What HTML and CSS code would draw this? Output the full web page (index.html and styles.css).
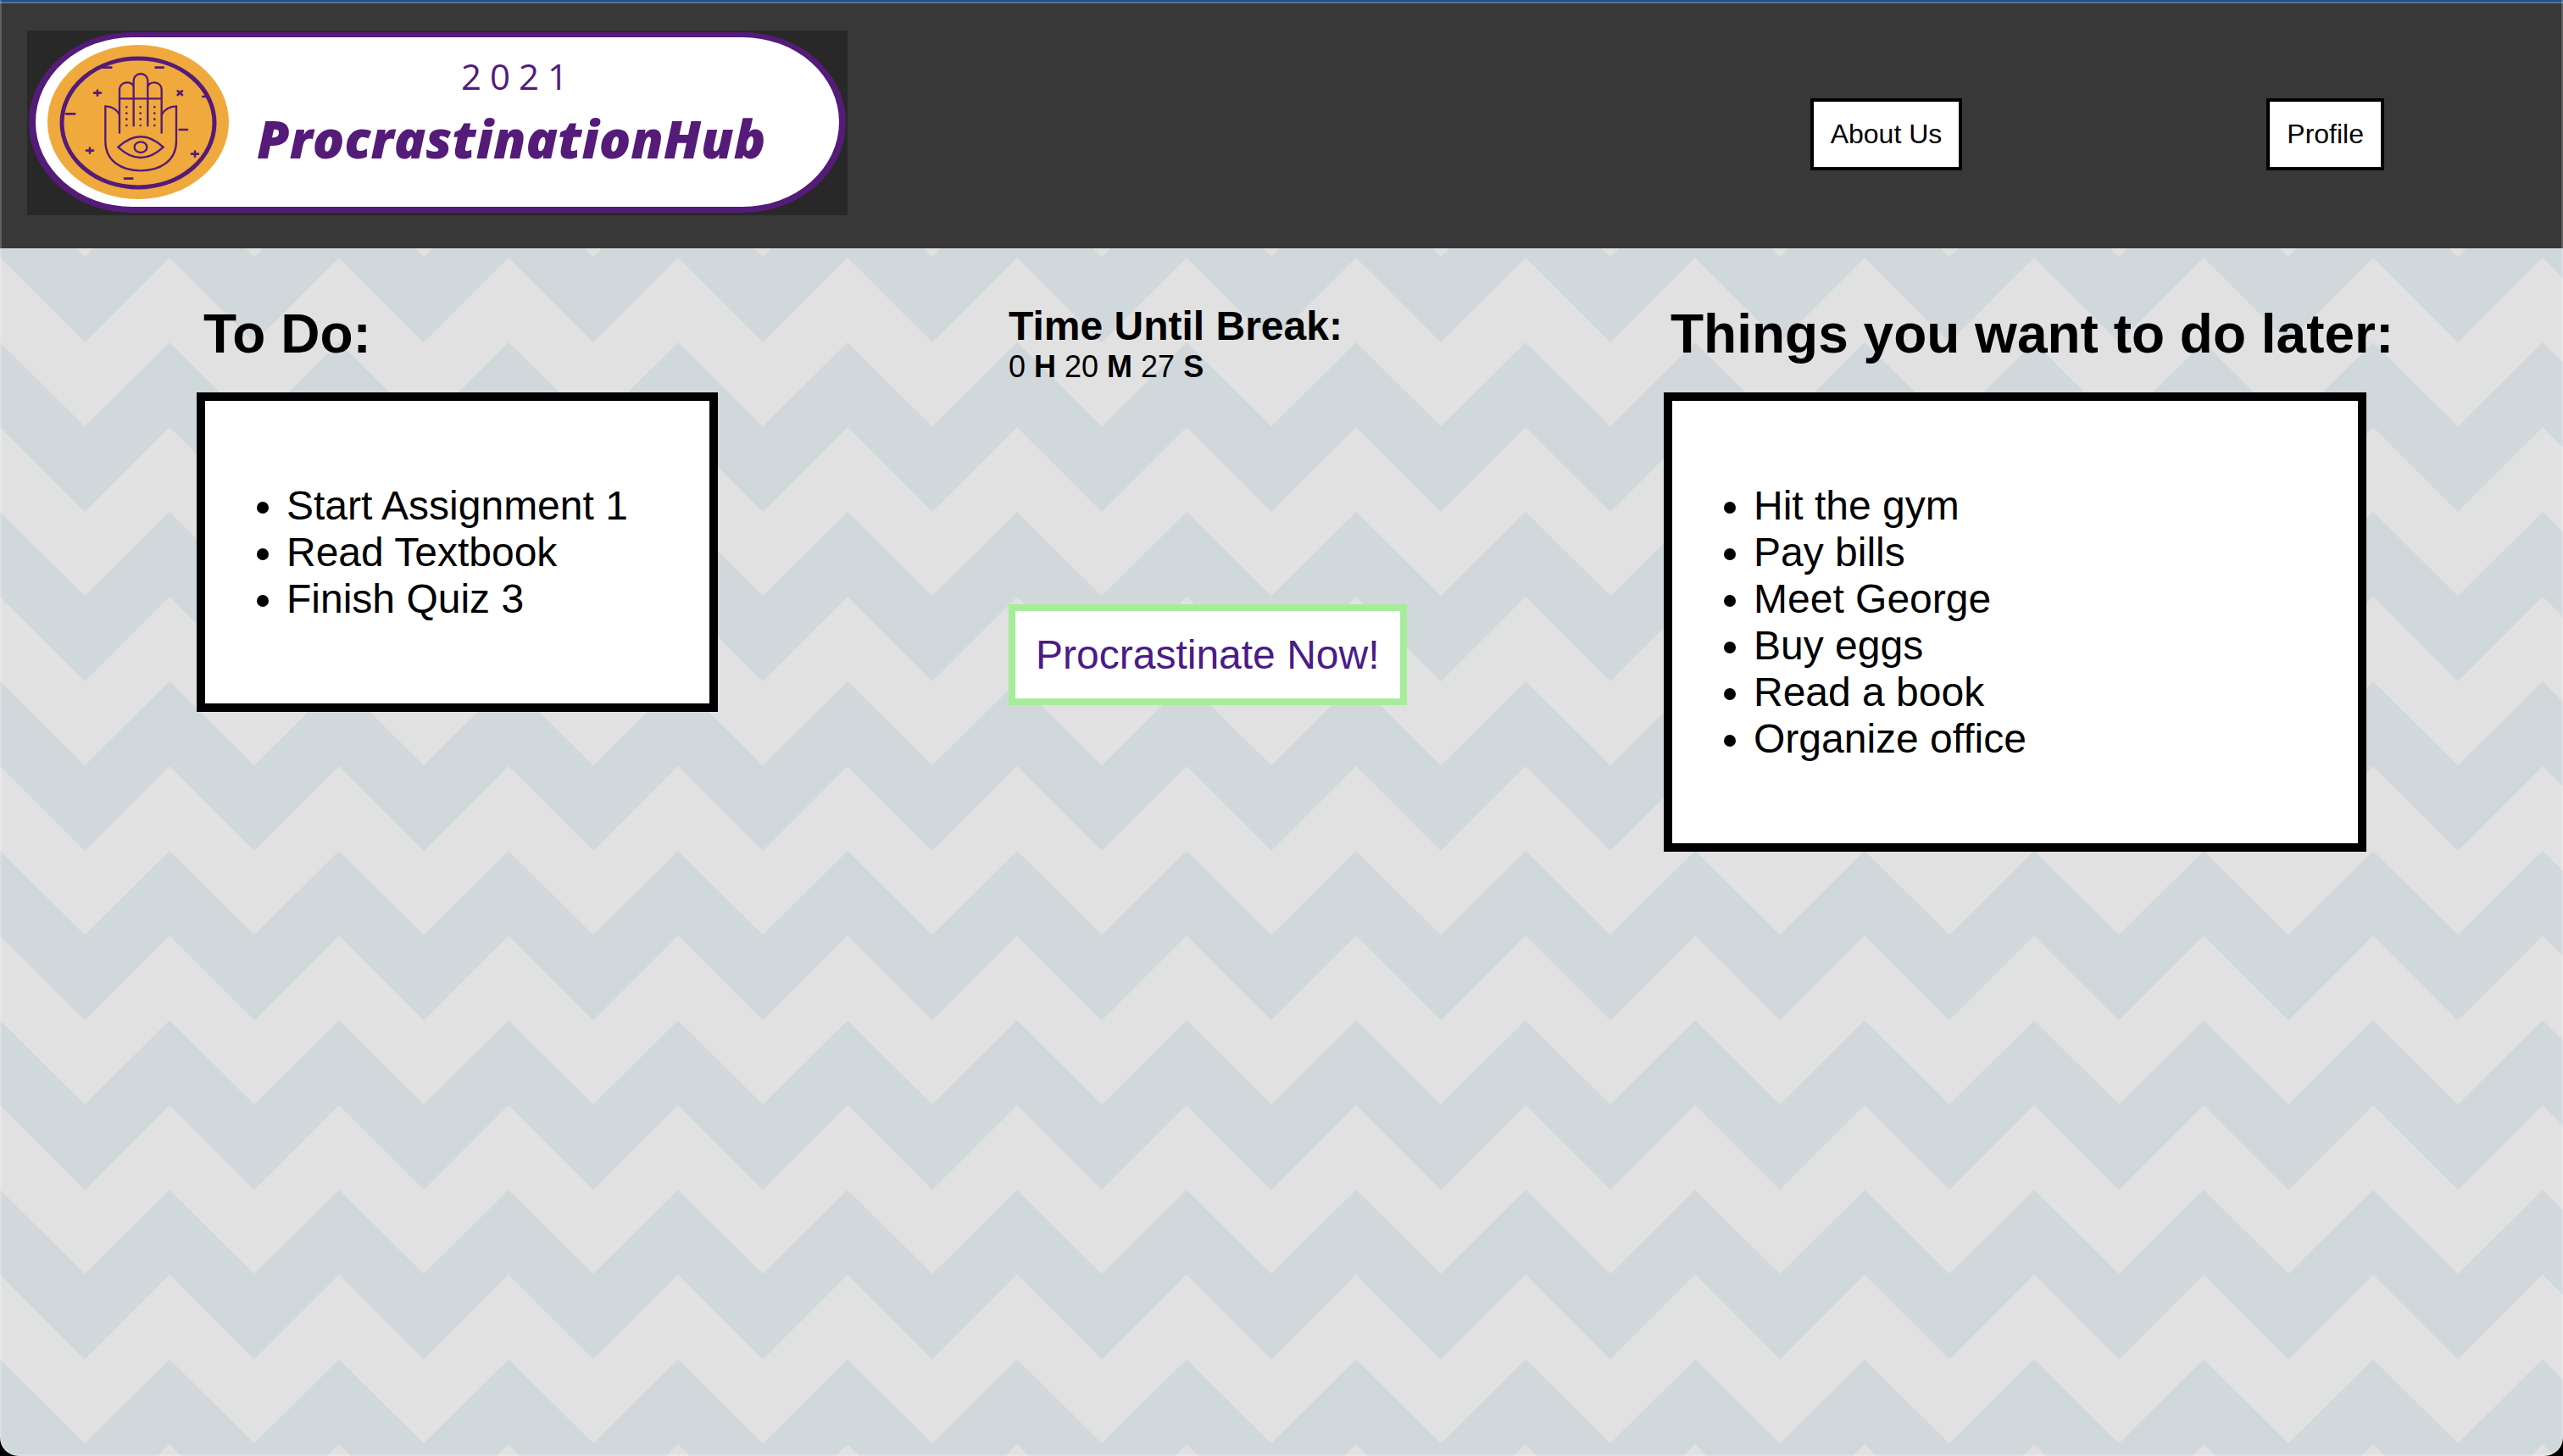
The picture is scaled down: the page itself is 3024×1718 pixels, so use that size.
FILE: index.html
```html
<!DOCTYPE html>
<html lang="en">
<head>
  <meta charset="utf-8">
  <title>ProcrastinationHub</title>
  <link rel="stylesheet" href="styles.css">
</head>
<body>
  <header class="site-header">
    <svg class="logo" viewBox="32 36 968 218" role="img" aria-label="ProcrastinationHub 2021">
      <rect class="logo-back" x="32" y="36" width="968" height="218"/>
      <rect class="logo-rim" x="34" y="38" width="964" height="213" rx="122" ry="106"/>
      <rect class="logo-pill" x="42" y="44" width="948" height="200" rx="114" ry="100"/>
      <ellipse class="logo-disc" cx="163" cy="144" rx="107" ry="91"/>
      <ellipse class="logo-ring" cx="163" cy="145" rx="90" ry="76"/>
      <g class="logo-lines" transform="scale(.33333)">
        <path d="M423 470V318C423 285 473 285 473 310M473 445V288C473 252 523 252 523 288V445M523 310C523 285 572 285 572 318V470M423 349H572"/>
        <path d="M423 406Q408 377 373 376V500C373 570 430 604 498 604S624 570 624 500V376Q588 377 572 406"/>
        <path d="M418 521Q498 447 578 521Q498 595 418 521Z"/>
        <ellipse cx="498" cy="521" rx="22" ry="19"/>
        <path class="marks" d="M358 239H394M551 239H578M234 403H265M635 459H663M441 632H469M718 342H735M333 329H357M345 320V338M306 533H330M318 524V542M678 545H702M690 536V554M629 322L645 336M645 322L629 336"/>
        <path class="dots" d="M448 379h0M448 401h0M448 422h0M448 444h0M497 379h0M497 401h0M497 422h0M497 444h0M547 379h0M547 401h0M547 422h0M547 444h0"/>
      </g>
      <text class="logo-year" x="544" y="106">2021</text>
      <text class="logo-name" x="303" y="187">ProcrastinationHub</text>
    </svg>
    <nav class="site-nav">
      <button class="nav-button" type="button">About Us</button>
      <button class="nav-button" type="button">Profile</button>
    </nav>
  </header>

  <main class="board">
    <section>
      <h1 class="list-title">To Do:</h1>
      <div class="card card-todo">
        <ul class="items">
          <li>Start Assignment 1</li>
          <li>Read Textbook</li>
          <li>Finish Quiz 3</li>
        </ul>
      </div>
    </section>
    <section>
      <h2 class="timer-title">Time Until Break:</h2>
      <p class="timer">0 <b>H</b> 20 <b>M</b> 27 <b>S</b></p>
      <a class="break-link" href="#">Procrastinate Now!</a>
    </section>
    <section>
      <h1 class="list-title">Things you want to do later:</h1>
      <div class="card card-later">
        <ul class="items">
          <li>Hit the gym</li>
          <li>Pay bills</li>
          <li>Meet George</li>
          <li>Buy eggs</li>
          <li>Read a book</li>
          <li>Organize office</li>
        </ul>
      </div>
    </section>
  </main>
</body>
</html>
```
FILE: styles.css
```css
* {
  box-sizing: border-box;
}

html {
  min-height: 100%;
  background: #e1e1e1 url("data:image/svg+xml,%3Csvg xmlns='http://www.w3.org/2000/svg' width='200' height='200'%3E%3Cpath fill='%23d0d8db' d='M0 4L100 103L200 4V104L100 204L0 104ZM0 -196L100 -97L200 -196V-96L100 4L0 -96Z'/%3E%3C/svg%3E");
}

body {
  margin: 0;
  min-height: 100vh;
  color: #000;
  font-family: "Liberation Sans", Arial, Helvetica, sans-serif;
}

/* Rounded window edge with its light hairline */
body::after {
  content: "";
  position: fixed;
  inset: 0;
  border: 2px solid rgba(255, 255, 255, 0.2);
  border-top: 0;
  border-radius: 0 0 22px 22px;
  box-shadow: 0 0 0 24px #000;
  pointer-events: none;
}

.site-header {
  display: flex;
  align-items: flex-start;
  justify-content: space-between;
  height: 293px;
  padding: 32px 211px 0 32px;
  border-top: 4px solid #53759f;
  background: #383838;
  position: relative;
}

.site-header::before {
  content: "";
  position: absolute;
  inset: -4px 0 auto;
  height: 2px;
  background: #284b7d;
}

.logo {
  flex: none;
  width: 968px;
  height: 218px;
}

.logo-back {
  fill: #282828;
}

.logo-rim {
  fill: #551b78;
}

.logo-pill {
  fill: #fff;
}

.logo-disc {
  fill: #f0a93c;
}

.logo-ring {
  fill: none;
  stroke: #551b78;
  stroke-width: 5px;
}

.logo-lines {
  fill: none;
  stroke: #551b78;
  stroke-width: 7px;
  stroke-linecap: round;
}

.marks {
  stroke-width: 8px;
}

.dots {
  stroke-width: 8px;
}

.logo-year,
.logo-name {
  fill: #551b78;
  font-family: "Open Sans", "Noto Sans", sans-serif;
}

.logo-year {
  font-size: 42px;
  font-weight: 500;
  letter-spacing: 10px;
}

.logo-name {
  font-size: 62px;
  font-style: italic;
  font-weight: 800;
}

.site-nav {
  display: flex;
  gap: 359px;
  padding-top: 80px;
}

.nav-button {
  padding: 20px;
  border: 4px solid #000;
  border-radius: 0;
  background: #fff;
  color: #000;
  font: 32px/37px "Liberation Sans", Arial, Helvetica, sans-serif;
}

.board {
  display: grid;
  grid-template-columns: 958fr 773fr 1061fr;
  padding: 64px 0 64px 232px;
}

.list-title {
  margin: 0 0 32px;
  padding-left: 8px;
  font-size: 64px;
  line-height: 74px;
}

.card {
  padding: 48px 16px;
  border: 10px solid #000;
  background: #fff;
}

.card-todo {
  max-width: 615px;
}

.card-later {
  max-width: 829px;
}

.items {
  margin: 48px 0;
  padding-left: 80px;
  font-size: 48px;
  line-height: 55px;
}

.timer-title {
  margin: 0;
  font-size: 48px;
  line-height: 55px;
}

.timer {
  margin: 0 0 260px;
  font-size: 36px;
  line-height: 41px;
}

.break-link {
  display: inline-block;
  padding: 24px;
  border: 8px solid #a7ed99;
  background: #fff;
  color: #4b1b87;
  font-size: 48px;
  line-height: 55px;
  text-decoration: none;
}
```
